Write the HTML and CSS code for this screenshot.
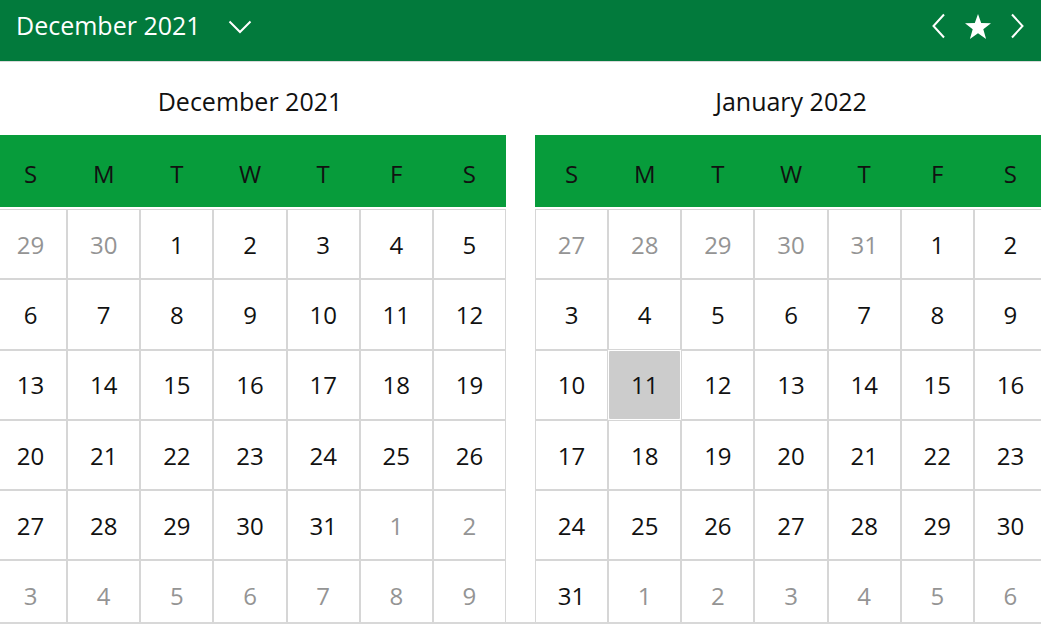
FILE: index.html
```html
<!DOCTYPE html>
<html lang="en">
<head>
    <meta charset="UTF-8">
    <meta name="viewport" content="width=device-width, initial-scale=1.0">
    <title>Calendar</title>
    <link rel="stylesheet" href="styles.css">
</head>
<body>
    <header class="topbar">
        <div class="topbar-title">
            <span>December 2021</span>
            <svg class="chevron" width="24" height="14" viewBox="0 0 24 14">
                <polyline points="1.5,1.5 12,12 22.5,1.5" fill="none" stroke="#fff" stroke-width="2"/>
            </svg>
        </div>
        <nav class="topbar-nav">
            <svg width="16" height="26" viewBox="0 0 16 26">
                <polyline points="13,1.5 2.5,13 13,24.5" fill="none" stroke="#fff" stroke-width="2"/>
            </svg>
            <svg width="28" height="27" viewBox="0 0 28 27">
                <polygon points="14,1 17.2,10 27,10.2 19.3,16.2 22.1,26 14,20.3 5.9,26 8.7,16.2 1,10.2 10.8,10" fill="#fff"/>
            </svg>
            <svg width="16" height="26" viewBox="0 0 16 26">
                <polyline points="3,1.5 13.5,13 3,24.5" fill="none" stroke="#fff" stroke-width="2"/>
            </svg>
        </nav>
    </header>

    <main class="months">
        <section class="month">
            <h2 class="month-title">December 2021</h2>
            <div class="weekdays">
                <span>S</span><span>M</span><span>T</span><span>W</span><span>T</span><span>F</span><span>S</span>
            </div>
            <div class="days">
                <span class="other">29</span><span class="other">30</span><span>1</span><span>2</span><span>3</span><span>4</span><span>5</span>
                <span>6</span><span>7</span><span>8</span><span>9</span><span>10</span><span>11</span><span>12</span>
                <span>13</span><span>14</span><span>15</span><span>16</span><span>17</span><span>18</span><span>19</span>
                <span>20</span><span>21</span><span>22</span><span>23</span><span>24</span><span>25</span><span>26</span>
                <span>27</span><span>28</span><span>29</span><span>30</span><span>31</span><span class="other">1</span><span class="other">2</span>
                <span class="other">3</span><span class="other">4</span><span class="other">5</span><span class="other">6</span><span class="other">7</span><span class="other">8</span><span class="other">9</span>
            </div>
        </section>

        <section class="month">
            <h2 class="month-title">January 2022</h2>
            <div class="weekdays">
                <span>S</span><span>M</span><span>T</span><span>W</span><span>T</span><span>F</span><span>S</span>
            </div>
            <div class="days">
                <span class="other">27</span><span class="other">28</span><span class="other">29</span><span class="other">30</span><span class="other">31</span><span>1</span><span>2</span>
                <span>3</span><span>4</span><span>5</span><span>6</span><span>7</span><span>8</span><span>9</span>
                <span>10</span><span class="selected">11</span><span>12</span><span>13</span><span>14</span><span>15</span><span>16</span>
                <span>17</span><span>18</span><span>19</span><span>20</span><span>21</span><span>22</span><span>23</span>
                <span>24</span><span>25</span><span>26</span><span>27</span><span>28</span><span>29</span><span>30</span>
                <span>31</span><span class="other">1</span><span class="other">2</span><span class="other">3</span><span class="other">4</span><span class="other">5</span><span class="other">6</span>
            </div>
        </section>
    </main>
</body>
</html>
```

FILE: styles.css
```css
* {
    margin: 0;
    padding: 0;
    box-sizing: border-box;
}

body {
    font-family: 'Open Sans', 'Noto Sans', sans-serif;
    background-color: #fff;
    color: #111;
    height: 625px;
    overflow: hidden;
}

.topbar {
    height: 62px;
    display: flex;
    align-items: center;
    justify-content: space-between;
    background-color: #027a3c;
    border-bottom: 1px solid #d9d9d9;
    color: #fff;
    padding: 0 16px 11px 16px;
}

.topbar-title {
    display: flex;
    align-items: center;
    gap: 27px;
    font-size: 25px;
}

.chevron {
    margin-top: 3px;
}

.topbar-nav {
    display: flex;
    align-items: center;
    gap: 17px;
    margin-top: 2px;
}

.months {
    display: flex;
    gap: 29px;
    margin-left: -6px;
    height: 562px;
    overflow: hidden;
    border-bottom: 2px solid #d8d8d8;
}

.month {
    width: 512px;
    flex-shrink: 0;
}

.month-title {
    height: 73px;
    display: flex;
    align-items: center;
    justify-content: center;
    padding-top: 5px;
    font-size: 25px;
    font-weight: normal;
    color: #111;
}

.weekdays {
    height: 72px;
    display: grid;
    grid-template-columns: repeat(7, 1fr);
    align-items: center;
    background-color: #079c3b;
    font-size: 24px;
    text-align: center;
    padding-top: 4px;
}

.days {
    display: grid;
    grid-template-columns: repeat(7, 1fr);
    grid-auto-rows: 70.3px;
    margin-top: 2px;
    font-size: 24px;
}

.days span {
    display: flex;
    align-items: center;
    justify-content: center;
    border: 1px solid #d6d6d6;
}

.days .other {
    color: #949494;
}

.days .selected {
    background-color: #cccccc;
    border-color: #fff;
    border-radius: 2px;
}
```
